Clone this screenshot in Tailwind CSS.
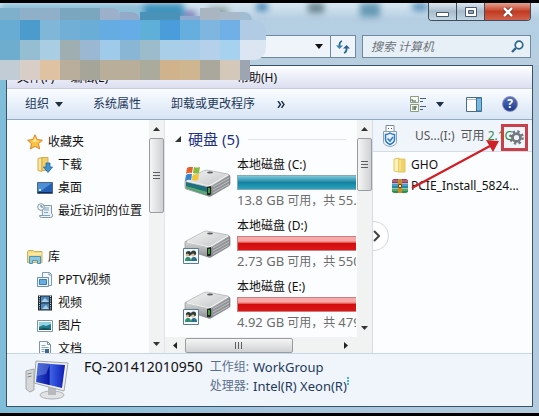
<!DOCTYPE html>
<html lang="zh-CN">

<head>
    <meta charset="UTF-8">
    <meta name="viewport" content="width=device-width, initial-scale=1.0">
    <script src="https://cdn.jsdelivr.net/npm/@tailwindcss/browser@4"></script>
    <title>计算机</title>
</head>

<body class="h-screen overflow-hidden bg-black font-['Noto_Sans','Noto_Sans_CJK_SC',sans-serif] text-xs text-[#111]">
    <!-- shared icons, not display:none or the gradients are lost -->
    <svg class="absolute size-0">
        <defs>
            <linearGradient id="metal" x1="0" y1="0" x2="1" y2="1">
                <stop offset="0" stop-color="#f4f4f4" />
                <stop offset="1" stop-color="#c2c4c6" />
            </linearGradient>
            <linearGradient id="front" x1="0" y1="0" x2="0" y2="1">
                <stop offset="0" stop-color="#d9dadb" />
                <stop offset="1" stop-color="#8b8d90" />
            </linearGradient>
            <linearGradient id="screen" x1="0" y1="0" x2="1" y2="0">
                <stop offset="0" stop-color="#2c4fd0" />
                <stop offset=".45" stop-color="#0a17a0" />
                <stop offset=".5" stop-color="#3d62e6" />
                <stop offset="1" stop-color="#0d1cb4" />
            </linearGradient>
            <symbol id="drive" viewBox="0 0 48 32">
                <path d="M2 14q0-1 2-1l24 5v11q-1 1-3 0L3 22q-1 0-1-2z" fill="url(#front)" stroke="#85888b" stroke-width=".6" />
                <path d="M28 18 46 8q1 0 1 2v7q0 1-2 2L28 29z" fill="#8f9194" stroke="#6e7073" stroke-width=".6" />
                <path d="M30 20l16-9M30 23l16-9M30 26l16-9" stroke="#c9cbcd" stroke-width=".8" />
                <path d="M3 13 20 4q2-1 4-1l21 4q2 1 0 2L29 19q-2 1-4 0L3 14z" fill="url(#metal)" stroke="#9fa2a5" stroke-width=".6" />
                <path d="M4 14l22 5 19-11" fill="none" stroke="#fff" stroke-width=".8" />
                <ellipse cx="27" cy="5.500" rx="3" ry="1" fill="#5b5d60" />
                <path d="M24 20l4-1v8q-1 2-4 1z" fill="#1e2421" />
                <path d="M26 21v5" stroke="#57cf4a" stroke-width="1.400" />
            </symbol>
            <symbol id="shared" viewBox="0 0 16 16">
                <path d="M.5.5h15v15H.5z" fill="#f3f8fb" stroke="#5d7c94" />
                <circle cx="5.500" cy="5.500" r="2.600" fill="#2b3a35" />
                <circle cx="10.500" cy="5" r="2.600" fill="#2b4038" />
                <circle cx="4.500" cy="7" r="1.600" fill="#d8b18c" />
                <circle cx="10" cy="7" r="1.600" fill="#e3bd98" />
                <path d="M2 13q0-4 3-4t3 4z" fill="#2d8d6a" />
                <path d="M8 13q0-4 3-4t3 4z" fill="#2b6f8e" />
            </symbol>
        </defs>
    </svg>

    <div class="relative flex h-full flex-col border-t-3 border-b-3 border-black bg-linear-to-r from-[#7fbdd8] via-[#a6c4dc] to-[#b4cbdd]">
        <!-- title bar -->
        <header class="relative flex h-8 shrink-0 justify-end overflow-hidden bg-linear-to-b from-[#d9e8f2] via-[#b5cee2] to-[#b4cfe3] pr-2">
            <!-- desktop showing through the glass -->
            <div class="absolute inset-0 flex items-start blur-[3px]">
                <i class="h-4 w-36 bg-[#8fc0d8]"></i>
                <i class="h-4 w-10 bg-[#3f93bd]"></i>
                <i class="mt-2 h-2 w-3 rounded-full bg-[#7d78b4]"></i>
                <i class="mt-1 ml-3 h-3 w-5 bg-[#93a8a8]"></i>
                <i class="ml-7 h-2 w-3 rounded-full bg-[#3f82b4]"></i>
                <i class="ml-10 h-2.5 w-4 bg-[#6a8791]"></i>
                <i class="ml-9 h-3.5 w-5 bg-[#6699b4]"></i>
                <i class="ml-8 h-2 w-4 rounded-full bg-[#5b93bd]"></i>
            </div>
            <div class="relative flex h-[18px] overflow-hidden rounded-b border border-t-0 border-[#3f4d5c]">
                <button aria-label="最小化" class="flex w-7 items-center justify-center border-r border-[#3f4d5c] bg-linear-to-b from-[#dce7f0] via-[#a8bccd] to-[#c3d6e4]">
                    <svg class="mt-1" width="13" height="6"><path d="M.5 1.500h12v4H.5z" fill="#fff" stroke="#4a5968" /></svg>
                </button>
                <button aria-label="最大化" class="flex w-7 items-center justify-center border-r border-[#3f4d5c] bg-linear-to-b from-[#dce7f0] via-[#a8bccd] to-[#c3d6e4]">
                    <svg width="12" height="10"><path d="M.5.5h11v9H.5z" fill="#fff" stroke="#4a5968" /><path d="M3.500 3.500h5v3h-5z" fill="#8fa5b8" stroke="#4a5968" /></svg>
                </button>
                <button aria-label="关闭" class="flex w-[45px] items-center justify-center bg-linear-to-b from-[#e3a090] via-[#c23a20] to-[#d2604a]">
                    <svg width="12" height="10" viewBox="0 0 12 10"><path d="M2 1l8 8M10 1 2 9" stroke="#6b2a22" stroke-width="4" /><path d="M2 1l8 8M10 1 2 9" stroke="#fff" stroke-width="2.500" /></svg>
                </button>
            </div>
        </header>

        <!-- address and search -->
        <div class="flex h-[30px] shrink-0 items-start gap-1.5 bg-linear-to-b from-[#b4cfe3] to-[#b9cfe0] pr-2">
            <div class="flex h-[23px] flex-1 border border-l-0 border-[#71899f] bg-[#eef4f9]">
                <input type="text" aria-label="地址" class="min-w-0 flex-1 outline-none">
                <button aria-label="历史记录" class="flex w-[22px] items-center justify-center">
                    <svg width="8" height="5"><path d="M0 0h8L4 5z" fill="#111" /></svg>
                </button>
                <button aria-label="刷新" class="flex w-[25px] items-center justify-center border-l border-[#71899f]">
                    <svg width="14" height="14" viewBox="0 0 14 14" fill="none" stroke="#286b96" stroke-width="1.800"><path d="M6 1Q3 2 3.500 7M8 13q3-1 2.500-6" /><path d="M0 5.500h7L3.500 9z" fill="#3683ae" stroke="none" /><path d="M7 8.500h7L10.500 5z" fill="#2d5f90" stroke="none" /></svg>
                </button>
            </div>
            <label class="flex h-[23px] w-[169px] items-center border border-[#71899f] bg-[#e8f0f7] pr-1.5 pl-2">
                <input type="search" aria-label="搜索" placeholder="搜索 计算机" class="min-w-0 flex-1 text-xs italic outline-none placeholder:text-[#6c7379]">
                <svg width="13" height="13" viewBox="0 0 13 13" fill="none" stroke="#2f6690"><circle cx="8" cy="5" r="3.800" stroke-width="1.700" fill="#f2f9ff" /><path d="M5 8l-4 4" stroke-width="2.400" /></svg>
            </label>
        </div>

        <main class="mx-1.5 mb-1.5 flex min-h-0 flex-1 flex-col border border-[#37536c] bg-[#fcfdfe]">
            <!-- menu -->
            <nav class="flex h-[22px] shrink-0 items-center gap-4 bg-linear-to-b from-white via-[#eceef8] to-[#dddff1] pt-0.5 pr-[255px] pl-2.5">
                <button>文件(F)</button>
                <button>编辑(E)</button>
                <button class="ml-auto">帮助(H)</button>
            </nav>

            <!-- command bar -->
            <div class="flex h-8 shrink-0 items-center border-t border-b border-t-[#c7cbdc] border-b-[#93a9c2] bg-linear-to-b from-[#fbfdff] via-[#e8f0fa] to-[#d8e5f4] pr-3.5 pl-[18px] text-[#1e395b]">
                <button class="flex items-center gap-1.5">组织 <svg width="8" height="5"><path d="M0 0h8L4 5z" fill="#1e2f42" /></svg></button>
                <button class="ml-[30px]">系统属性</button>
                <button class="ml-[30px]">卸载或更改程序</button>
                <button aria-label="更多" class="ml-[22px]">
                    <svg width="8" height="7" viewBox="0 0 8 7" fill="none" stroke="#1e2f42" stroke-width="1.400"><path d="M1 0l2.500 3.500L1 7M4.500 0 7 3.500 4.500 7" /></svg>
                </button>
                <button aria-label="更改视图" class="ml-auto flex items-center gap-2.5">
                    <svg width="16" height="16" viewBox="0 0 16 16"><path d="M.5.500h8v6h-8zM.5 8.500h8v7h-8z" fill="#f7fbf2" stroke="#8d9c80" /><path d="M2 3v2h4M2 11h5M2 13h4M5 10v4" stroke="#3f5c4a" fill="none" /><path d="M10 2.500h6M10 5.500h3M10 10.500h6M10 13.500h3" stroke="#47607c" /></svg>
                    <svg width="8" height="5"><path d="M0 0h8L4 5z" fill="#1e2f42" /></svg>
                </button>
                <button aria-label="预览窗格" class="ml-[22px]">
                    <svg width="16" height="15"><path d="M.5.5h15v14H.5z" fill="#fff" stroke="#4c6b8a" /><path d="M1 2.500h9" stroke="#a9bdd0" /><path d="M10.500 1h5v13h-5z" fill="#7cb8dc" stroke="#39739c" /></svg>
                </button>
                <button aria-label="帮助" class="ml-5 flex size-4 items-center justify-center rounded-full border border-[#8793bb] bg-linear-to-b from-[#5771bd] to-[#1d3990] font-bold text-white">?</button>
            </div>

            <div class="flex min-h-0 flex-1">
                <!-- navigation pane -->
                <aside class="flex w-[158px] shrink-0 border-r border-[#dde5ef]">
                    <ul class="min-w-0 flex-1 overflow-hidden pt-2.5 pl-5 *:flex *:h-[23px] *:items-center *:gap-[5px] *:whitespace-nowrap">
                        <li>
                            <svg width="16" height="16" viewBox="0 0 16 16"><path d="M8 .8l2.200 4.800 5.200.6-3.900 3.500 1.100 5.200L8 12.300l-4.600 2.600 1.100-5.200L.6 6.200l5.200-.6z" fill="#fbc344" stroke="#d98520" /><path d="M8 3l1.500 3.500 3 .5-4.500 1-4-1 2.600-.5z" fill="#ffe89a" /></svg>
                            收藏夹
                        </li>
                        <li class="pl-2.5">
                            <svg width="16" height="16" viewBox="0 0 16 16"><path d="M1 1.500l4-1v14l-4-1z" fill="#f9e69b" stroke="#d3ac4c" /><path d="M5 .5h6v13H5z" fill="#efcf6d" stroke="#d3ac4c" /><path d="M9 6h4v4h2.500L11 15.500 6.500 10H9z" fill="#3c94d4" stroke="#1d639f" stroke-width=".8" /></svg>
                            下载
                        </li>
                        <li class="pl-2.5">
                            <svg width="16" height="16" viewBox="0 0 16 16"><path d="M.5 2.500h15v11H.5z" fill="#2460b4" stroke="#4d6480" /><path d="M1 3h14L4 11H1z" fill="#4d90d8" /><path d="M1 12h14v1H1z" fill="#142a52" /><path d="M2 9h2v2H2z" fill="#cfe5fb" /></svg>
                            桌面
                        </li>
                        <li class="pl-2.5">
                            <svg width="16" height="16" viewBox="0 0 16 16"><path d="M5 2.500h9.500v8q1 0 1 2t-2 2h-9q-2 0-2-2h3z" fill="#edf2f6" stroke="#8298aa" /><path d="M7 5h5M7 7h5M7 9.500h4M5 12.500h8" stroke="#7aa4bf" /><circle cx="4" cy="4" r="3.300" fill="#f3f8fb" stroke="#8298aa" /><path d="M4 2v2h2" fill="none" stroke="#4c7594" /></svg>
                            最近访问的位置
                        </li>
                        <li class="mt-[23px]">
                            <svg width="16" height="16" viewBox="0 0 16 16"><path d="M.5 2.500l1-1h5l1 1h7.500v11H.5z" fill="#f3dc85" stroke="#c9b15c" /><path d="M1 5h14" stroke="#fff3c0" /><path d="M2.500 7.500h11v7h-3v-3h-5v3h-3z" fill="#8ec6df" stroke="#4f95b8" /></svg>
                            库
                        </li>
                        <li class="pl-2.5">
                            <svg width="16" height="16" viewBox="0 0 16 16"><path d="M5.500.5h7l2 2v11h-9z" fill="#f2f7fb" stroke="#8099b2" /><path d="M12 .5V3h2.500" fill="none" stroke="#8099b2" /><path d="M.5 5.500h11v9H.5z" fill="#e9f3fc" stroke="#6f92b4" /><path d="M2.500 7.500h7v5h-7z" fill="#65aee5" stroke="#3e7eb8" /></svg>
                            PPTV视频
                        </li>
                        <li class="pl-2.5">
                            <svg width="16" height="16" viewBox="0 0 16 16"><path d="M1 .5h14v15H1z" fill="#1f2c38" /><path d="M4 1.500h8v6H4zM4 8.500h8v6H4z" fill="#4c86b4" /><path d="M4 7l4-4 4 4zM5 14l4-4 3 4z" fill="#a7cde6" /><path d="M2.500 1v14M13.500 1v14" stroke="#dce5ec" stroke-dasharray="1 1.300" /></svg>
                            视频
                        </li>
                        <li class="pl-2.5">
                            <svg width="16" height="16" viewBox="0 0 16 16"><path d="M.5 2.500h15v11H.5z" fill="#fff" stroke="#7e97a8" /><path d="M2 4h12v8H2z" fill="#8fd3e5" /><path d="M2 9l4-2 3 1 5-2v6H2z" fill="#237a89" /><path d="M2 11l6-1 6 1v1H2z" fill="#0f4d5a" /></svg>
                            图片
                        </li>
                        <li class="pl-2.5">
                            <svg width="16" height="16" viewBox="0 0 16 16"><path d="M2.500.5h8l3 3v12h-11z" fill="#f8fbfd" stroke="#7f95a8" /><path d="M10.500.5v3h3" fill="none" stroke="#7f95a8" /><path d="M4.500 4.500h4M4.500 6.500h7M4.500 8.500h3M4.500 10.500h3M4.500 12.500h7" stroke="#8aa6bd" /><path d="M8 8h4v4H8z" fill="#3b6797" /></svg>
                            文档
                        </li>
                    </ul>
                    <div class="flex w-[15px] shrink-0 flex-col items-center bg-[#f1f2f2]">
                        <svg class="my-[7px] shrink-0" width="7" height="4"><path d="M0 4h7L3.500 0z" fill="#333" /></svg>
                        <div class="flex h-[75px] w-full items-center justify-center rounded-xs border border-[#9a9da0] bg-linear-to-r from-[#f5f5f5] to-[#cfd1d3]">
                            <svg width="7" height="8"><path d="M0 .5h7M0 3.500h7M0 6.500h7" stroke="#5c5f62" /></svg>
                        </div>
                        <svg class="mt-auto mb-[7px] shrink-0" width="7" height="4"><path d="M0 0h7L3.500 4z" fill="#333" /></svg>
                    </div>
                </aside>

                <!-- drives -->
                <section class="flex min-w-0 flex-1 flex-col">
                    <div class="flex min-h-0 flex-1">
                        <div class="min-w-0 flex-1 overflow-hidden pt-2 pl-2.5">
                            <h2 class="flex h-[22px] items-center gap-[7px] pr-2.5 text-[15px] text-[#1e3287]">
                                <svg width="6" height="6"><path d="M6 0v6H0z" fill="#333" /></svg>
                                硬盘 (5)
                                <span class="ml-0.5 h-px flex-1 bg-[#e0e4ec]"></span>
                            </h2>
                            <ul class="*:flex *:h-[61px] *:gap-1.5 *:pt-[7px] *:pl-2 *:whitespace-nowrap">
                                <li>
                                    <svg class="mt-2.5 shrink-0" width="48" height="32" viewBox="0 0 48 32">
                                        <use href="#drive" />
                                        <path d="M3 15l21 5v8L3 21z" fill="#1f6f7c" />
                                        <path d="M3 19l21 6v3L3 21z" fill="#58a96c" />
                                        <path d="M4 1q3-2 6-1l-1 6q-3-1-6 1z" fill="#e5622d" />
                                        <path d="M11 0q3 1 6 0l-1 6q-3 1-6 0z" fill="#84bb3a" />
                                        <path d="M3 8q3-2 6-1l-1 6q-3-1-6 1z" fill="#3586cd" />
                                        <path d="M10 7q3 1 6 0l-1 6q-3 1-6 0z" fill="#f5c431" />
                                    </svg>
                                    <div class="min-w-0 flex-1">
                                        <p class="h-[18px] leading-4">本地磁盘 (C:)</p>
                                        <div class="h-[15px] border border-r-0 border-[#8aa9b2] bg-linear-to-b from-[#7bcbdc] via-[#1283a0] to-[#2ba4bf]"></div>
                                        <p class="mt-0.5 leading-4 text-[#6d6d6d]"><span class="text-[13px]">13.8 GB</span> 可用，共 <span class="text-[13px]">55.</span></p>
                                    </div>
                                </li>
                                <li>
                                    <div class="relative mt-2.5 h-9 w-12 shrink-0">
                                        <svg width="48" height="32"><use href="#drive" /></svg>
                                        <svg class="absolute bottom-0 left-0" width="16" height="16"><use href="#shared" /></svg>
                                    </div>
                                    <div class="min-w-0 flex-1">
                                        <p class="h-[18px] leading-4">本地磁盘 (D:)</p>
                                        <div class="h-[15px] border border-r-0 border-[#c98080] bg-linear-to-b from-[#f7a9a9] from-30% via-[#d30d0d] via-50% to-[#dc1616]"></div>
                                        <p class="mt-0.5 leading-4 text-[#6d6d6d]"><span class="text-[13px]">2.73 GB</span> 可用，共 <span class="text-[13px]">550</span></p>
                                    </div>
                                </li>
                                <li>
                                    <div class="relative mt-2.5 h-9 w-12 shrink-0">
                                        <svg width="48" height="32"><use href="#drive" /></svg>
                                        <svg class="absolute bottom-0 left-0" width="16" height="16"><use href="#shared" /></svg>
                                    </div>
                                    <div class="min-w-0 flex-1">
                                        <p class="h-[18px] leading-4">本地磁盘 (E:)</p>
                                        <div class="h-[15px] border border-r-0 border-[#c98080] bg-linear-to-b from-[#f7a9a9] from-30% via-[#d30d0d] via-50% to-[#dc1616]"></div>
                                        <p class="mt-0.5 leading-4 text-[#6d6d6d]"><span class="text-[13px]">4.92 GB</span> 可用，共 <span class="text-[13px]">479</span></p>
                                    </div>
                                </li>
                            </ul>
                        </div>
                        <div class="ml-px flex w-[15px] shrink-0 flex-col items-center bg-[#f1f2f2]">
                            <svg class="my-[7px] shrink-0" width="7" height="4"><path d="M0 4h7L3.500 0z" fill="#333" /></svg>
                            <div class="flex h-[53px] w-full items-center justify-center rounded-xs border border-[#9a9da0] bg-linear-to-r from-[#f5f5f5] to-[#cfd1d3]">
                                <svg width="7" height="8"><path d="M0 .5h7M0 3.500h7M0 6.500h7" stroke="#5c5f62" /></svg>
                            </div>
                            <svg class="mt-auto mb-[7px] shrink-0" width="7" height="4"><path d="M0 0h7L3.500 4z" fill="#333" /></svg>
                        </div>
                    </div>
                    <div class="flex h-4 shrink-0 items-center bg-[#f1f2f2] pr-6 pl-2">
                        <svg width="4" height="7"><path d="M4 0v7L0 3.500z" fill="#222" /></svg>
                        <div class="ml-2 flex h-[15px] w-[108px] items-center justify-center rounded-xs border border-[#9a9da0] bg-linear-to-b from-[#f5f5f5] to-[#cfd1d3]">
                            <svg width="8" height="7"><path d="M.5 0v7M3.500 0v7M6.500 0v7" stroke="#5c5f62" /></svg>
                        </div>
                        <svg class="ml-auto" width="4" height="7"><path d="M0 0v7l4-3.500z" fill="#222" /></svg>
                    </div>
                </section>

                <!-- usb panel -->
                <aside class="relative w-[160px] shrink-0 border-l border-[#d3dde9]">
                    <div class="flex h-8 items-center border-b border-[#d5dce4] bg-[#f0f5fc] pr-2 pl-[9px] text-[#555]">
                        <svg width="16" height="22" viewBox="0 0 16 22"><path d="M4 .5h8v6H4z" fill="#fff" stroke="#7c8b99" /><path d="M6 3.500h1M9 3.500h1" stroke="#555" /><path d="M1.500 6.500h13v10q0 4-6.500 5-6.500-1-6.500-5z" fill="#f6faff" stroke="#8ba0b4" /><path d="M8 8q2 1.500 4.500 1.500v5q0 3-4.500 5-4.500-2-4.500-5v-5Q6 9.500 8 8z" fill="#e8f2fc" stroke="#2f79c8" stroke-width="1.500" /><path d="M5.500 13.500l2.500 2.500 3-4" fill="none" stroke="#2f79c8" stroke-width="1.500" /></svg>
                        <span class="ml-[17px] whitespace-nowrap">US...(I:)</span>
                        <span class="ml-1.5 whitespace-nowrap">可用 <span class="text-[#2f8a45]">2.1G</span></span>
                    </div>
                    <ul class="pt-0.5 pl-[19px] *:flex *:h-[21px] *:items-center *:gap-[3px] *:whitespace-nowrap">
                        <li>
                            <svg width="16" height="16" viewBox="0 0 16 16"><path d="M2 2l5-1v14l-5-1z" fill="#fff2b3" stroke="#e2c565" /><path d="M7 2h6v13H7z" fill="#f1d368" stroke="#e2c565" /><path d="M8 3v11" stroke="#fff0aa" /></svg>
                            GHO
                        </li>
                        <li>
                            <svg width="16" height="16" viewBox="0 0 16 16"><path d="M0 2l2-1h12l2 1v3H0z" fill="#9c3a56" /><path d="M0 5.500h16V10H0z" fill="#2488b4" /><path d="M0 10.500h16V14l-2 1H2l-2-1z" fill="#2f9147" /><path d="M0 3h16M0 7h16M0 12h16" stroke="#fff" stroke-opacity=".4" /><path d="M6 1h4v14H6z" fill="#c88a2c" /><path d="M6.500 6.500h3v3h-3z" fill="#f6e3a1" stroke="#6e4a12" /></svg>
                            PCIE_Install_5824...
                        </li>
                    </ul>
                    <!-- half-round collapse handle -->
                    <div class="absolute top-[101px] left-0 h-[30px] w-4 overflow-hidden">
                        <button aria-label="收起" class="-ml-3.5 flex size-[30px] items-center justify-end rounded-full border border-[#d3d8de] bg-white pr-2">
                            <svg width="7" height="12" viewBox="0 0 7 12"><path d="M1 1l5 5-5 5" fill="none" stroke="#444" stroke-width="2" /></svg>
                        </button>
                    </div>
                    <button aria-label="设置" class="absolute top-1 right-1 flex size-[27px] items-center justify-center border-3 border-[#c8404a] pl-1">
                        <svg width="15" height="15" viewBox="0 0 15 15"><circle cx="7.500" cy="7.500" r="6" fill="none" stroke="#747980" stroke-width="2.600" stroke-dasharray="2.400 2.312" /><circle cx="7.500" cy="7.500" r="3.900" fill="none" stroke="#747980" stroke-width="2.600" /></svg>
                    </button>
                    <svg class="absolute top-4 right-8" width="94" height="56" viewBox="0 0 94 56"><path d="M6 52 84 10" stroke="#cf1f27" stroke-width="2.200" /><path d="M93 5 87 16 80 4z" fill="#cf1f27" /></svg>
                </aside>
            </div>

            <!-- details pane -->
            <footer class="flex h-[53px] shrink-0 border-t border-[#c9d6e6] bg-[#f0f5fb] pt-1 pl-[18px]">
                <svg class="mt-0.5" width="46" height="40" viewBox="0 0 46 40">
                    <path d="M1 11l8-2v21l-4 2-4-3z" fill="#d6d8d9" stroke="#a4a6a8" />
                    <path d="M2.500 14l4-1M2.500 17l4-1" stroke="#7f8285" />
                    <ellipse cx="27" cy="35" rx="12" ry="4" fill="#e2e3e4" stroke="#adb0b2" />
                    <path d="M23 27l8 1v7h-8z" fill="#b7babc" />
                    <path d="M11 1l32 2-4 28-30-8z" fill="#eef0f1" stroke="#a3a7ab" />
                    <path d="M13 3l27 2-3 23-26-6z" fill="url(#screen)" />
                    <path d="M13 3l12 1-4 10-9 2z" fill="#8ba8f5" fill-opacity=".4" />
                </svg>
                <h1 class="ml-[13px] text-sm leading-[18px]">FQ-201412010950</h1>
                <dl class="ml-[7px] grid auto-rows-[19px] grid-cols-[auto_auto] content-start gap-x-1 leading-[18px] whitespace-nowrap">
                    <dt class="text-[#5a6f8c]">工作组:</dt>
                    <dd class="text-[13px] text-[#1e395b]">WorkGroup</dd>
                    <dt class="text-[#5a6f8c]">处理器:</dt>
                    <dd class="flex text-[13px] text-[#1e395b]">Intel(R) Xeon(R)<span class="h-2 border-l-2 border-dotted border-[#4bb5cf]"></span></dd>
                </dl>
            </footer>
        </main>

        <!-- mosaic over the path and menu -->
        <div class="absolute top-[5px] left-0 grid grid-cols-[repeat(12,20px)_26px] grid-rows-[12px_20px_20px_20px]">
            <i class="bg-[#7fb0cb]"></i><i class="bg-[#8fb0c8]"></i><i class="bg-[#8fb0c8]"></i><i class="bg-[#7aa6c0]"></i><i class="bg-[#7aa6be]"></i><i class="rounded-tr-lg bg-[#9cb0cc]"></i><i class="mt-1 rounded-tr-lg bg-[#93abc8]"></i><i class="mt-1 bg-[#4b92b8]"></i><i class="mt-1 bg-[#4b92b8]"></i><i class="mt-2 bg-[#8fa9cf]"></i><i class="bg-[#a9b5c0]"></i><i class="mt-1 bg-[#aab9c9]"></i><i class="mt-1 w-3 rounded-tr-lg bg-[#9fbcd3]"></i>
            <i class="bg-[#68acd3]"></i><i class="bg-[#4b9ccd]"></i><i class="bg-[#80b6d8]"></i><i class="bg-[#72afd6]"></i><i class="bg-[#6aaed8]"></i><i class="bg-[#64ace2]"></i><i class="bg-[#66ace6]"></i><i class="bg-[#5fb0d8]"></i><i class="bg-[#4a9cdb]"></i><i class="bg-[#66aedd]"></i><i class="bg-[#7eb6df]"></i><i class="bg-[#70b0e6]"></i><i class="rounded-tr-xl bg-[#b0cbe3]"></i>
            <i class="bg-[#6eadce]"></i><i class="bg-[#96bed2]"></i><i class="bg-[#a9cde2]"></i><i class="bg-[#9faeb0]"></i><i class="bg-[#9bb8d2]"></i><i class="bg-[#9fcaea]"></i><i class="bg-[#8ab6d5]"></i><i class="bg-[#9cbccc]"></i><i class="bg-[#a9cfe8]"></i><i class="bg-[#aaceea]"></i><i class="bg-[#b4d0ea]"></i><i class="bg-[#a6d1ef]"></i><i class="rounded-br-xl bg-[#dce6f2]"></i>
            <i class="bg-[#c2ccd4]"></i><i class="bg-[#d9cdc8]"></i><i class="bg-[#dfc2a2]"></i><i class="bg-[#b9ae9c]"></i><i class="bg-[#a5a699]"></i><i class="bg-[#b9ae9a]"></i><i class="bg-[#b9ae9a]"></i><i class="bg-[#aaab9d]"></i><i class="bg-[#d0b28c]"></i><i class="bg-[#d0b690]"></i><i class="bg-[#aaa89c]"></i><i class="bg-[#d3c8b9]"></i><i class="w-2.5 bg-[#9da5b2]"></i>
        </div>
    </div>
</body>

</html>
